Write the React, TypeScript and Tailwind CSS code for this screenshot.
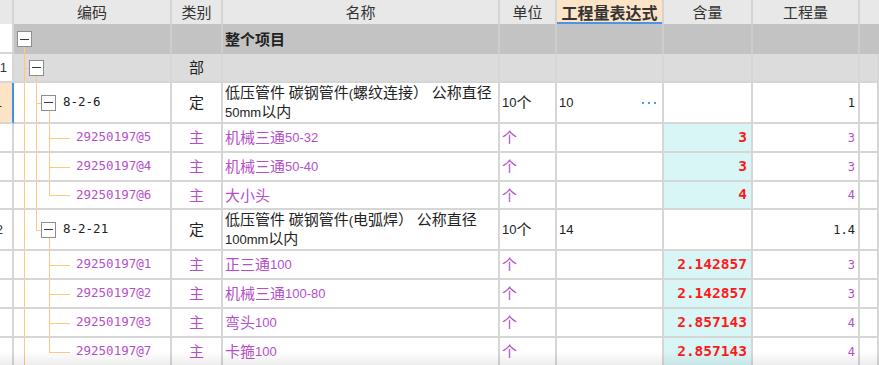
import React from "react";

const GRID = "grid grid-cols-[14px_158px_51px_277px_57px_107px_89px_107px_19px]";
const CELL = "border-r-2 border-b-2 border-[#d6d6d6] relative flex items-center overflow-hidden";
const PURPLE = "text-[#b44fc9]";
const LINE = "absolute bg-[#ffc880]";
const CJK_RE = /[\u3000-\u9fff\uff00-\uffef]/;

function Rich({ text, latin = "font-['Liberation_Sans',sans-serif] text-[13px]" }: { text: string; latin?: string }) {
  const parts = text.match(/[\u3000-\u9fff\uff00-\uffef]+|[^\u3000-\u9fff\uff00-\uffef]+/g) || [];
  return (
    <>
      {parts.map((p, i) =>
        CJK_RE.test(p) ? (
          <span key={i} className="text-[15px]">
            {p}
          </span>
        ) : (
          <span key={i} className={latin}>
            {p}
          </span>
        )
      )}
    </>
  );
}

function Box({ pos }: { pos: string }) {
  return (
    <div
      className={
        "absolute top-1/2 -translate-y-1/2 w-[15px] h-[16px] border border-[#8e8e8e] bg-white flex items-center justify-center " +
        pos
      }
    >
      <div className="w-[9px] h-px bg-[#3a3a3a]" />
    </div>
  );
}

function Header() {
  const h = "border-r-2 border-[#d4d4d4] flex items-center justify-center text-[15px] text-[#333] bg-[#e8e8e8]";
  return (
    <div className={GRID + " h-[24px]"}>
      <div className={h} />
      <div className={h}>编码</div>
      <div className={h}>类别</div>
      <div className={h}>名称</div>
      <div className={h}>单位</div>
      <div className="relative border-r-2 border-[#d4d4d4] flex items-center justify-center text-[16px] font-bold text-[#333] bg-[#fde4c6]">
        工程量表达式
        <div className="absolute left-0 right-0 bottom-0 h-[2px] bg-[#4a94ea]" />
      </div>
      <div className={h}>含量</div>
      <div className={h}>工程量</div>
      <div className="bg-[#e8e8e8]" />
    </div>
  );
}

type Sub = { code: string; name: string; amt: string; qty: string; last: boolean };

const group1: Sub[] = [
  { code: "29250197@5", name: "机械三通50-32", amt: "3", qty: "3", last: false },
  { code: "29250197@4", name: "机械三通50-40", amt: "3", qty: "3", last: false },
  { code: "29250197@6", name: "大小头", amt: "4", qty: "4", last: true },
];
const group2: Sub[] = [
  { code: "29250197@1", name: "正三通100", amt: "2.142857", qty: "3", last: false },
  { code: "29250197@2", name: "机械三通100-80", amt: "2.142857", qty: "3", last: false },
  { code: "29250197@3", name: "弯头100", amt: "2.857143", qty: "4", last: false },
  { code: "29250197@7", name: "卡箍100", amt: "2.857143", qty: "4", last: true },
];

function SubRow({ s, h, inGroup1 }: { s: Sub; h: string; inGroup1: boolean }) {
  return (
    <div className={GRID + " " + h}>
      <div className={CELL + " bg-white"} />
      <div className={CELL}>
        <div className={LINE + " w-px left-[10px] top-0 bottom-0"} />
        {inGroup1 && <div className={LINE + " w-px left-[22px] top-0 bottom-0"} />}
        {s.last ? (
          <div className={LINE + " w-px left-[35px] top-0 h-1/2"} />
        ) : (
          <div className={LINE + " w-px left-[35px] top-0 bottom-0"} />
        )}
        <div className={LINE + " h-px left-[35px] w-[21px] top-1/2"} />
        <span className={"pl-[62px] font-['DejaVu_Sans_Mono',monospace] text-[12.5px] " + PURPLE}>{s.code}</span>
      </div>
      <div className={CELL + " justify-center text-[15px] " + PURPLE}>主</div>
      <div className={CELL + " pl-[2px] whitespace-nowrap " + PURPLE}>
        <Rich text={s.name} />
      </div>
      <div className={CELL + " pl-[2px] text-[15px] " + PURPLE}>个</div>
      <div className={CELL} />
      <div className={CELL + " justify-end pr-[4px] bg-[#d8f6f6]"}>
        <span className="font-['DejaVu_Sans_Mono',monospace] font-bold text-[14.5px] text-[#ff1a1a]">{s.amt}</span>
      </div>
      <div className={CELL + " justify-end pr-[3px]"}>
        <span className={"font-['DejaVu_Sans_Mono',monospace] text-[12px] " + PURPLE}>{s.qty}</span>
      </div>
      <div className={CELL} />
    </div>
  );
}

function DingRow({
  num,
  code,
  line1,
  line2,
  expr,
  qty,
  selected,
  lastSibling,
}: {
  num: string;
  code: string;
  line1: string;
  line2: string;
  expr: string;
  qty: string;
  selected: boolean;
  lastSibling: boolean;
}) {
  return (
    <div className={GRID + " h-[41px]"}>
      {selected ? (
        <div className="border-b-2 border-b-[#d6d6d6] border-r-2 border-r-[#3d8fea] bg-[#fde3c6] flex items-center justify-end pr-[10px] overflow-hidden">
          <span className="text-[13px] font-['Liberation_Sans',sans-serif] text-[#333]">{num}</span>
        </div>
      ) : (
        <div className={CELL + " bg-white justify-end pr-[9px]"}>
          <span className="text-[13px] font-['Liberation_Sans',sans-serif] text-[#333]">{num}</span>
        </div>
      )}
      <div className={CELL}>
        <div className={LINE + " w-px left-[10px] top-0 bottom-0"} />
        {lastSibling ? (
          <div className={LINE + " w-px left-[22px] top-0 h-1/2"} />
        ) : (
          <div className={LINE + " w-px left-[22px] top-0 bottom-0"} />
        )}
        <div className={LINE + " h-px left-[22px] w-[5px] top-1/2"} />
        <Box pos="left-[27px]" />
        <div className={LINE + " w-px left-[35px] top-[calc(50%+8px)] bottom-0"} />
        <span className="pl-[49px] font-['DejaVu_Sans_Mono',monospace] text-[12.5px] text-[#222]">{code}</span>
      </div>
      <div className={CELL + " justify-center text-[15px] text-[#222]"}>定</div>
      <div className={CELL + " !items-start pl-[2px] text-[#222]"}>
        <div className="leading-[16px]">
          <div className="whitespace-nowrap">
            <Rich text={line1} />
          </div>
          <div className="whitespace-nowrap">
            <Rich text={line2} />
          </div>
        </div>
      </div>
      <div className={CELL + " pl-[2px] text-[#222]"}>
        <Rich text="10个" />
      </div>
      <div className={CELL + " pl-[2px] text-[#222]"}>
        <span className="font-['Liberation_Sans',sans-serif] text-[13px]">{expr}</span>
        {selected && (
          <>
            <div className="absolute -top-[2px] -left-[2px] -right-[2px] -bottom-[2px] border-2 border-[#7e7e7e]" />
            <div className="absolute right-[6px] top-1/2 -translate-y-1/2 flex gap-[4px]">
              <div className="w-[2px] h-[2px] bg-[#5a9ad8]" />
              <div className="w-[2px] h-[2px] bg-[#5a9ad8]" />
              <div className="w-[2px] h-[2px] bg-[#5a9ad8]" />
            </div>
          </>
        )}
      </div>
      <div className={CELL} />
      <div className={CELL + " justify-end pr-[3px]"}>
        <span className="font-['DejaVu_Sans_Mono',monospace] text-[12px] text-[#222]">{qty}</span>
      </div>
      <div className={CELL} />
    </div>
  );
}

export default function App() {
  return (
    <div className="relative w-[879px] h-[365px] overflow-hidden bg-white font-['Noto_Sans_CJK_SC',sans-serif]">
      <Header />
      {/* 整个项目 */}
      <div className={GRID + " h-[30px] bg-[#c3c3c3]"}>
        <div className="border-r-2 border-b-2 border-[#d6d6d6] bg-white" />
        <div className="border-r-2 border-[#cdcdcd] relative">
          <Box pos="left-[3px]" />
          <div className={LINE + " w-px left-[10px] top-[calc(50%+8px)] bottom-0"} />
        </div>
        <div className="border-r-2 border-[#cdcdcd]" />
        <div className="border-r-2 border-[#cdcdcd] flex items-center pl-[2px] text-[15px] font-bold text-[#222]">整个项目</div>
        <div className="border-r-2 border-[#cdcdcd]" />
        <div className="border-r-2 border-[#cdcdcd]" />
        <div className="border-r-2 border-[#cdcdcd]" />
        <div className="border-r-2 border-[#cdcdcd]" />
        <div />
      </div>
      {/* 部 */}
      <div className={GRID + " h-[29px] bg-[#dcdcdc]"}>
        <div className={CELL + " bg-white justify-end pr-[5px]"}>
          <span className="text-[13px] font-['Liberation_Sans',sans-serif] text-[#333]">1</span>
        </div>
        <div className={CELL}>
          <div className={LINE + " w-px left-[10px] top-0 bottom-0"} />
          <div className={LINE + " h-px left-[10px] w-[5px] top-1/2"} />
          <Box pos="left-[15px]" />
          <div className={LINE + " w-px left-[22px] top-[calc(50%+8px)] bottom-0"} />
        </div>
        <div className={CELL + " justify-center text-[15px] text-[#222]"}>部</div>
        <div className={CELL} />
        <div className={CELL} />
        <div className={CELL} />
        <div className={CELL} />
        <div className={CELL} />
        <div className={CELL} />
      </div>
      <DingRow
        num="1"
        code="8-2-6"
        line1="低压管件 碳钢管件(螺纹连接） 公称直径"
        line2="50mm以内"
        expr="10"
        qty="1"
        selected
        lastSibling={false}
      />
      {group1.map((s, i) => (
        <SubRow key={s.code} s={s} h={i === 2 ? "h-[28px]" : "h-[29px]"} inGroup1 />
      ))}
      <DingRow
        num="2"
        code="8-2-21"
        line1="低压管件 碳钢管件(电弧焊） 公称直径"
        line2="100mm以内"
        expr="14"
        qty="1.4"
        selected={false}
        lastSibling
      />
      {group2.map((s) => (
        <SubRow key={s.code} s={s} h="h-[29px]" inGroup1={false} />
      ))}
      <div className="absolute left-0 right-0 bottom-0 h-[14px] bg-gradient-to-b from-transparent to-black/[0.07] pointer-events-none" />
    </div>
  );
}
